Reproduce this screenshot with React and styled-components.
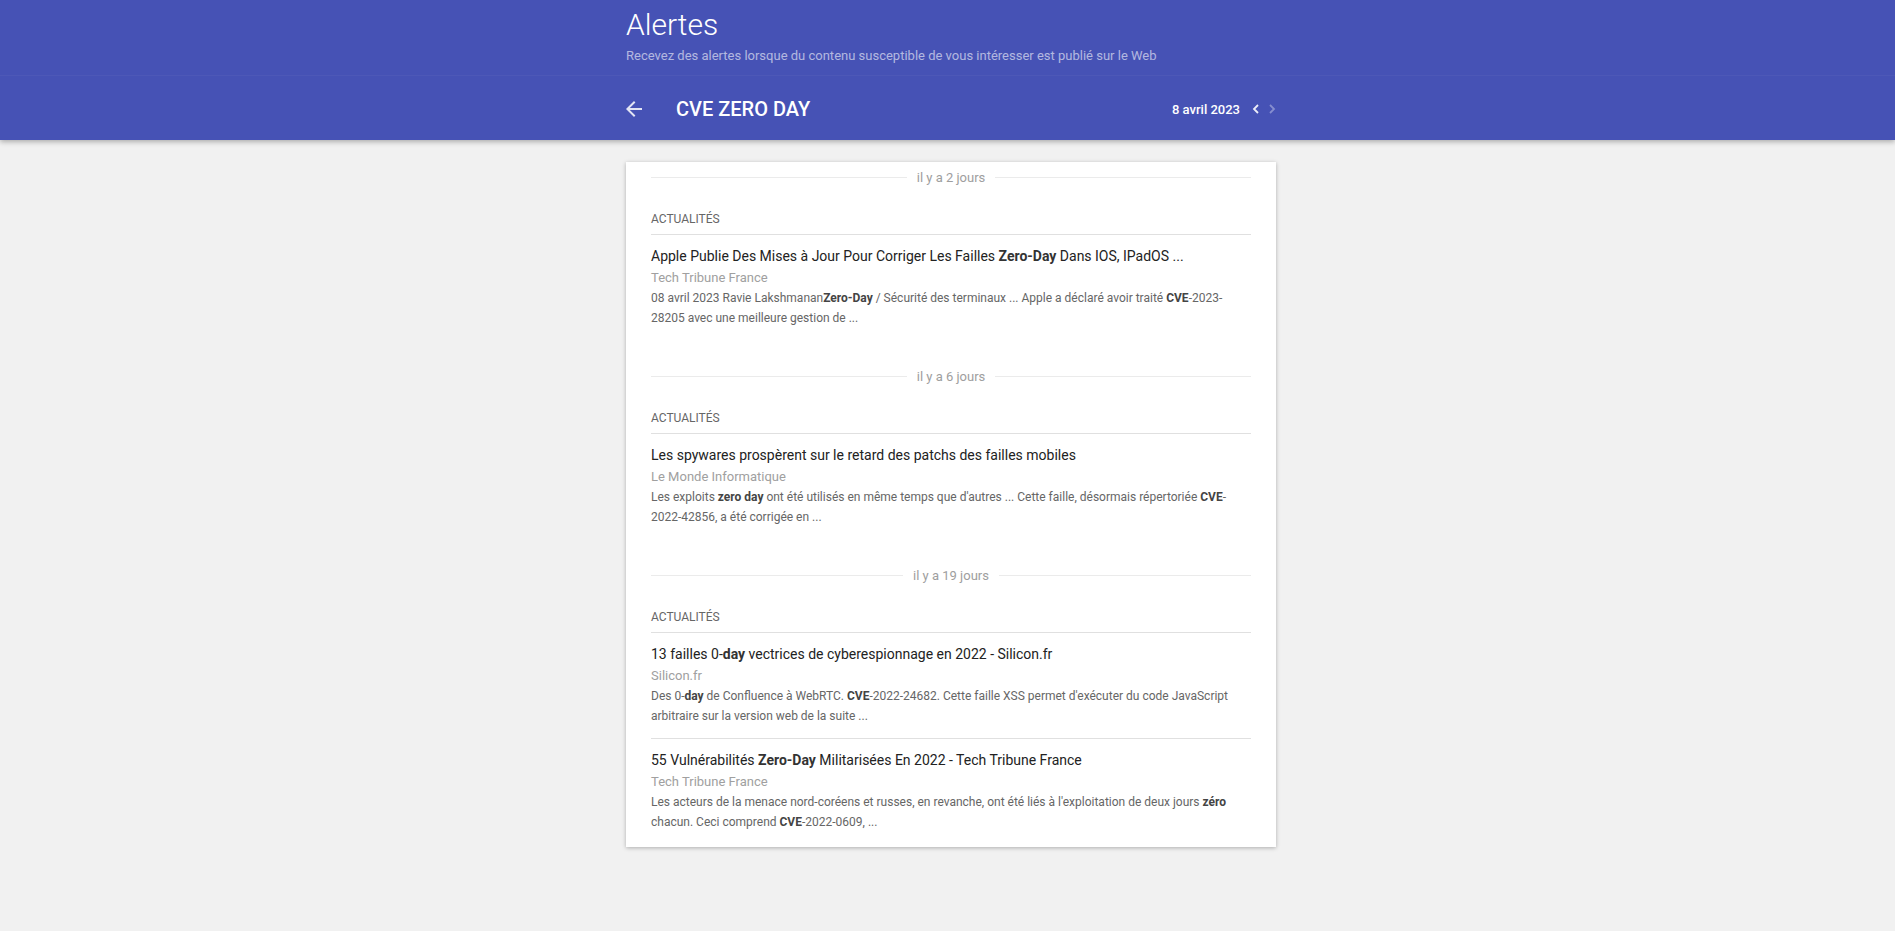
import React from "react";
import styled, { createGlobalStyle } from "styled-components";

const Global = createGlobalStyle`
  html, body { margin: 0; padding: 0; background: #f1f1f1; }
  body { font-family: Roboto, "Noto Sans", Arial, sans-serif; -webkit-font-smoothing: antialiased; }
  * { box-sizing: border-box; }
`;

const Page = styled.div`
  min-height: 931px;
  background: #f1f1f1;
`;

const Header = styled.header`
  background: #4652b5;
  height: 140px;
  box-shadow: 0 2px 5px rgba(0, 0, 0, 0.28);
  position: relative;
  z-index: 1;
`;

const HeaderBand = styled.div`
  padding-left: 7px;
  height: ${(p) => p.$h}px;
  border-bottom: ${(p) => (p.$line ? "1px solid rgba(255,255,255,0.04)" : "0")};
`;

const Column = styled.div`
  width: 650px;
  margin: 0 auto;
`;

const TopBlock = styled.div`
  padding-top: 6px;
`;

const AppTitle = styled.h1`
  margin: 0;
  font-size: 30px;
  font-weight: 300;
  line-height: 38px;
  color: #ffffff;
`;

const Subtitle = styled.p`
  margin: 4px 0 0;
  font-size: 13px;
  line-height: 16px;
  color: rgba(255, 255, 255, 0.6);
`;

const AlertBar = styled.div`
  height: 63px;
  display: flex;
  align-items: center;
  padding-top: 3px;
`;

const IconButton = styled.button`
  border: 0;
  background: none;
  padding: 0;
  margin: 0 0 0 -4px;
  width: 24px;
  height: 24px;
  display: flex;
  align-items: center;
  justify-content: center;
  color: rgba(255, 255, 255, 0.85);
  cursor: pointer;
`;

const AlertName = styled.h2`
  margin: 0 0 0 30px;
  font-size: 20px;
  font-weight: 500;
  color: #ffffff;
  flex: 1;
`;

const DateNav = styled.div`
  display: flex;
  align-items: center;
  gap: 8px;
`;

const DateLabel = styled.span`
  font-size: 13px;
  font-weight: 500;
  color: #ffffff;
  margin-right: 4px;
`;

const Chevron = styled.span`
  display: flex;
  color: ${(p) => (p.$disabled ? "rgba(255,255,255,0.35)" : "rgba(255,255,255,0.9)")};
`;

const Main = styled.main`
  padding: 22px 0 40px 7px;
`;

const Card = styled.div`
  background: #fff;
  box-shadow: 0 1px 4px rgba(0, 0, 0, 0.28);
  padding: 0 25px 3px;
`;

const Section = styled.section`
  & + & {
    margin-top: 21.5px;
  }
`;

const DateSep = styled.div`
  height: 30px;
  display: flex;
  align-items: center;
  gap: 10px;
  font-size: 13px;
  color: #9e9e9e;
  &::before,
  &::after {
    content: "";
    flex: 1;
    height: 1px;
    background: #ebebeb;
  }
`;

const Category = styled.div`
  margin-top: 18.5px;
  font-size: 12px;
  line-height: 16px;
  color: #666;
  padding-bottom: 7px;
  border-bottom: 1px solid #e0e0e0;
`;

const Item = styled.article`
  padding: 11px 0;
  & + & {
    border-top: 1px solid #e0e0e0;
  }
`;

const ItemTitle = styled.div`
  font-size: 14px;
  line-height: 21px;
  color: #222;
  b { font-weight: 700; color: #333; }
`;

const Source = styled.div`
  font-size: 13px;
  line-height: 21px;
  color: #a0a0a0;
`;

const Snippet = styled.div`
  font-size: 12px;
  line-height: 20.5px;
  color: #666;
  b { font-weight: 700; color: #444; }
`;

const ArrowBack = () => (
  <svg width="24" height="24" viewBox="0 0 24 24" fill="currentColor">
    <path d="M20 11H7.83l5.59-5.59L12 4l-8 8 8 8 1.41-1.41L7.83 13H20v-2z" />
  </svg>
);

const ChevronIcon = ({ dir }) => (
  <svg width="8" height="10" viewBox="0 0 8 10" fill="none" stroke="currentColor" strokeWidth="1.8">
    {dir === "left" ? <polyline points="6,1 2,5 6,9" /> : <polyline points="2,1 6,5 2,9" />}
  </svg>
);

const sections = [
  {
    when: "il y a 2 jours",
    items: [
      {
        title: <>Apple Publie Des Mises à Jour Pour Corriger Les Failles <b>Zero-Day</b> Dans IOS, IPadOS ...</>,
        source: "Tech Tribune France",
        snippet: <>08 avril 2023 Ravie Lakshmanan<b>Zero-Day</b> / Sécurité des terminaux ... Apple a déclaré avoir traité <b>CVE</b>-2023-28205 avec une meilleure gestion de ...</>,
      },
    ],
  },
  {
    when: "il y a 6 jours",
    items: [
      {
        title: <>Les spywares prospèrent sur le retard des patchs des failles mobiles</>,
        source: "Le Monde Informatique",
        snippet: <>Les exploits <b>zero day</b> ont été utilisés en même temps que d'autres ... Cette faille, désormais répertoriée <b>CVE</b>-2022-42856, a été corrigée en ...</>,
      },
    ],
  },
  {
    when: "il y a 19 jours",
    items: [
      {
        title: <>13 failles 0-<b>day</b> vectrices de cyberespionnage en 2022 - Silicon.fr</>,
        source: "Silicon.fr",
        snippet: <>Des 0-<b>day</b> de Confluence à WebRTC. <b>CVE</b>-2022-24682. Cette faille XSS permet d'exécuter du code JavaScript arbitraire sur la version web de la suite ...</>,
      },
      {
        title: <>55 Vulnérabilités <b>Zero-Day</b> Militarisées En 2022 - Tech Tribune France</>,
        source: "Tech Tribune France",
        snippet: <>Les acteurs de la menace nord-coréens et russes, en revanche, ont été liés à l'exploitation de deux jours <b>zéro</b> chacun. Ceci comprend <b>CVE</b>-2022-0609, ...</>,
      },
    ],
  },
];

export default function App() {
  return (
    <Page>
      <Global />
      <Header>
        <HeaderBand $h={76} $line>
          <Column>
            <TopBlock>
              <AppTitle>Alertes</AppTitle>
              <Subtitle>Recevez des alertes lorsque du contenu susceptible de vous intéresser est publié sur le Web</Subtitle>
            </TopBlock>
          </Column>
        </HeaderBand>
        <HeaderBand $h={64}>
          <Column>
            <AlertBar>
              <IconButton aria-label="Retour"><ArrowBack /></IconButton>
              <AlertName>CVE ZERO DAY</AlertName>
              <DateNav>
                <DateLabel>8 avril 2023</DateLabel>
                <Chevron><ChevronIcon dir="left" /></Chevron>
                <Chevron $disabled><ChevronIcon dir="right" /></Chevron>
              </DateNav>
            </AlertBar>
          </Column>
        </HeaderBand>
      </Header>
      <Main>
        <Column>
          <Card>
            {sections.map((s) => (
              <Section key={s.when}>
                <DateSep>{s.when}</DateSep>
                <Category>ACTUALITÉS</Category>
                {s.items.map((it, i) => (
                  <Item key={i}>
                    <ItemTitle>{it.title}</ItemTitle>
                    <Source>{it.source}</Source>
                    <Snippet>{it.snippet}</Snippet>
                  </Item>
                ))}
              </Section>
            ))}
          </Card>
        </Column>
      </Main>
    </Page>
  );
}
